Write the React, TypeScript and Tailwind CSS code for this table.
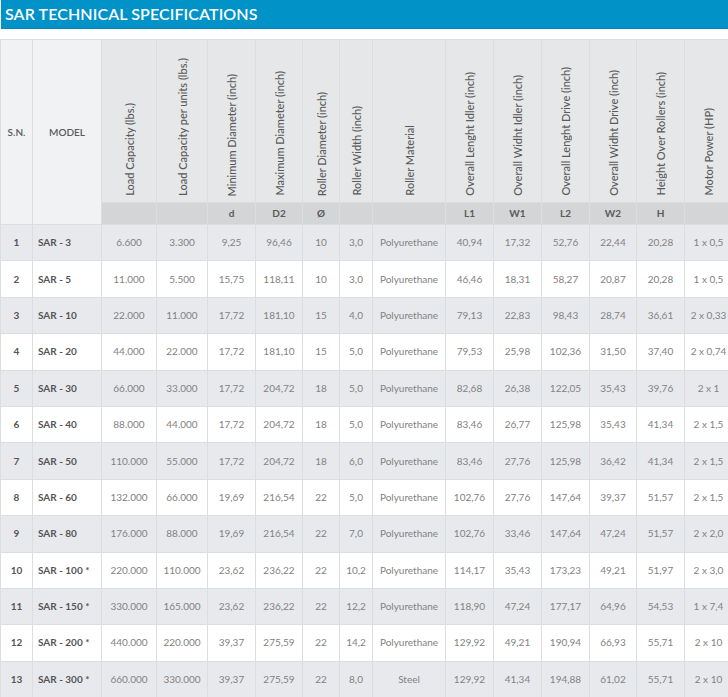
import React from "react";

type Row = {
  sn: number;
  model: string;
  values: string[];
};

const heads: { label: string; sub: string }[] = [
  { label: "Load Capacity (lbs.)", sub: "" },
  { label: "Load Capacity per units (lbs.)", sub: "" },
  { label: "Minimum Diameter (inch)", sub: "d" },
  { label: "Maximum Diameter (inch)", sub: "D2" },
  { label: "Roller Diameter (inch)", sub: "Ø" },
  { label: "Roller Width (inch)", sub: "" },
  { label: "Roller Material", sub: "" },
  { label: "Overall Lenght Idler (inch)", sub: "L1" },
  { label: "Overall Widht Idler (inch)", sub: "W1" },
  { label: "Overall Lenght Drive (inch)", sub: "L2" },
  { label: "Overall Widht Drive (inch)", sub: "W2" },
  { label: "Height Over Rollers (inch)", sub: "H" },
  { label: "Motor Power (HP)", sub: "" },
];

const widths = [32, 69, 55, 51, 48, 47, 37, 33, 73, 48, 48, 48, 47, 48, 48];

const rows: Row[] = [
  { sn: 1, model: "SAR - 3", values: ["6.600", "3.300", "9,25", "96,46", "10", "3,0", "Polyurethane", "40,94", "17,32", "52,76", "22,44", "20,28", "1 x 0,5"] },
  { sn: 2, model: "SAR - 5", values: ["11.000", "5.500", "15,75", "118,11", "10", "3,0", "Polyurethane", "46,46", "18,31", "58,27", "20,87", "20,28", "1 x 0,5"] },
  { sn: 3, model: "SAR - 10", values: ["22.000", "11.000", "17,72", "181,10", "15", "4,0", "Polyurethane", "79,13", "22,83", "98,43", "28,74", "36,61", "2 x 0,33"] },
  { sn: 4, model: "SAR - 20", values: ["44.000", "22.000", "17,72", "181,10", "15", "5,0", "Polyurethane", "79,53", "25,98", "102,36", "31,50", "37,40", "2 x 0,74"] },
  { sn: 5, model: "SAR - 30", values: ["66.000", "33.000", "17,72", "204,72", "18", "5,0", "Polyurethane", "82,68", "26,38", "122,05", "35,43", "39,76", "2 x 1"] },
  { sn: 6, model: "SAR - 40", values: ["88.000", "44.000", "17,72", "204,72", "18", "5,0", "Polyurethane", "83,46", "26,77", "125,98", "35,43", "41,34", "2 x 1,5"] },
  { sn: 7, model: "SAR - 50", values: ["110.000", "55.000", "17,72", "204,72", "18", "6,0", "Polyurethane", "83,46", "27,76", "125,98", "36,42", "41,34", "2 x 1,5"] },
  { sn: 8, model: "SAR - 60", values: ["132.000", "66.000", "19,69", "216,54", "22", "5,0", "Polyurethane", "102,76", "27,76", "147,64", "39,37", "51,57", "2 x 1,5"] },
  { sn: 9, model: "SAR - 80", values: ["176.000", "88.000", "19,69", "216,54", "22", "7,0", "Polyurethane", "102,76", "33,46", "147,64", "47,24", "51,57", "2 x 2,0"] },
  { sn: 10, model: "SAR - 100 *", values: ["220.000", "110.000", "23,62", "236,22", "22", "10,2", "Polyurethane", "114,17", "35,43", "173,23", "49,21", "51,97", "2 x 3,0"] },
  { sn: 11, model: "SAR - 150 *", values: ["330.000", "165.000", "23,62", "236,22", "22", "12,2", "Polyurethane", "118,90", "47,24", "177,17", "64,96", "54,53", "1 x 7,4"] },
  { sn: 12, model: "SAR - 200 *", values: ["440.000", "220.000", "39,37", "275,59", "22", "14,2", "Polyurethane", "129,92", "49,21", "190,94", "66,93", "55,71", "2 x 10"] },
  { sn: 13, model: "SAR - 300 *", values: ["660.000", "330.000", "39,37", "275,59", "22", "8,0", "Steel", "129,92", "41,34", "194,88", "61,02", "55,71", "2 x 10"] },
];

export default function App() {
  return (
    <div className="w-[728px] h-[697px] overflow-hidden bg-white font-['Lato','Open_Sans',sans-serif]">
      <div className="h-[29px] ml-px bg-[#0192c8] border-b border-[#0a84b6] flex items-center pl-1">
        <h1 className="text-[16px] font-semibold text-white tracking-[0.1px] leading-none">
          SAR TECHNICAL SPECIFICATIONS
        </h1>
      </div>
      <div className="h-[10px]" />
      <table className="table-fixed border-collapse w-[732px] border-t border-[#dcdddf]">
        <colgroup>
          {widths.map((w, i) => (
            <col key={i} style={{ width: w }} />
          ))}
        </colgroup>
        <thead>
          <tr className="h-[163px]">
            <th
              rowSpan={2}
              className="bg-[#f1f2f4] border border-[#dcdddf] text-[10px] font-semibold text-[#5a5a5a] align-middle"
            >
              S.N.
            </th>
            <th
              rowSpan={2}
              className="bg-[#f1f2f4] border border-[#dcdddf] text-[10px] font-semibold text-[#5a5a5a] align-middle"
            >
              MODEL
            </th>
            {heads.map((h) => (
              <th
                key={h.label}
                className="bg-[#e6e7e9] border border-[#dcdddf] align-bottom pb-[6px] px-0"
              >
                <div className="flex justify-center">
                  <span className="[writing-mode:vertical-rl] rotate-180 text-[11px] font-medium text-[#5a5a5a] whitespace-nowrap leading-none">
                    {h.label}
                  </span>
                </div>
              </th>
            ))}
          </tr>
          <tr className="h-[22px]">
            {heads.map((h) => (
              <th
                key={h.label}
                className="bg-[#d4d5d7] border border-[#dcdddf] text-[10px] font-bold text-[#5a5a5a] align-middle"
              >
                {h.sub}
              </th>
            ))}
          </tr>
        </thead>
        <tbody>
          {rows.map((r) => (
            <tr
              key={r.sn}
              className={r.sn % 2 === 1 ? "h-[36.4px] bg-[#e8e9ed]" : "h-[36.4px] bg-white"}
            >
              <td className="border border-[#dcdddf] text-center text-[10px] font-bold text-[#555]">
                {r.sn}
              </td>
              <td className="border border-[#dcdddf] pl-[5px] text-[10px] font-bold text-[#555] whitespace-nowrap">
                {r.model}
              </td>
              {r.values.map((v, i) => (
                <td
                  key={i}
                  className="border border-[#dcdddf] text-center text-[10px] text-[#828282] whitespace-nowrap"
                >
                  {v}
                </td>
              ))}
            </tr>
          ))}
        </tbody>
      </table>
    </div>
  );
}
